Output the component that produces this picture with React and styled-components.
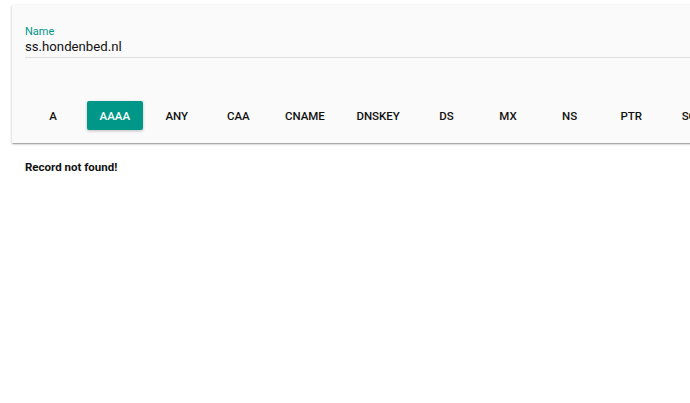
import React from 'react';
import styled, { createGlobalStyle } from 'styled-components';

const GlobalStyle = createGlobalStyle`
  html, body {
    margin: 0;
    padding: 0;
    background: #ffffff;
    overflow: hidden;
    font-family: Roboto, "Liberation Sans", Arial, sans-serif;
  }
`;

const Page = styled.div`
  width: 690px;
  height: 403px;
  overflow: hidden;
`;

const Card = styled.div`
  margin: 5px 0 0 12px;
  width: 760px;
  background: #fafafa;
  box-shadow: 0 1px 3px rgba(0, 0, 0, 0.2), 0 1px 1px rgba(0, 0, 0, 0.14), 0 2px 1px -1px rgba(0, 0, 0, 0.12);
  padding: 20px 0 13px 13px;
  box-sizing: border-box;
`;

const Field = styled.div`
  display: flex;
  flex-direction: column;
`;

const Label = styled.label`
  color: #009688;
  font-size: 11px;
  line-height: 13px;
`;

const Input = styled.input`
  border: none;
  border-bottom: 1px solid #dedede;
  background: transparent;
  font-family: Roboto, "Liberation Sans", Arial, sans-serif;
  font-size: 13.2px;
  line-height: 16px;
  height: 20px;
  box-sizing: border-box;
  color: #111;
  padding: 1px 0 3px;
  outline: none;
`;

const Types = styled.div`
  display: flex;
  gap: 5.6px;
  margin-top: 43px;
`;

const TypeButton = styled.button`
  min-width: 56px;
  height: 29px;
  padding: 0 13px;
  border: none;
  border-radius: 2px;
  font-family: Roboto, "Liberation Sans", Arial, sans-serif;
  font-weight: 500;
  font-size: 11.5px;
  text-transform: uppercase;
  flex-shrink: 0;
  background: ${p => (p.$active ? '#009688' : 'transparent')};
  color: ${p => (p.$active ? '#ffffff' : '#111')};
  box-shadow: ${p => (p.$active ? '0 1px 3px rgba(0,0,0,0.25)' : 'none')};
`;

const Message = styled.p`
  margin: 17px 0 0 25px;
  font-size: 11.5px;
  line-height: 14px;
  font-weight: 700;
  color: #111;
`;

const types = ['A', 'AAAA', 'ANY', 'CAA', 'CNAME', 'DNSKEY', 'DS', 'MX', 'NS', 'PTR', 'SOA'];

export default function App() {
  return (
    <Page>
      <GlobalStyle />
      <Card>
        <Field>
          <Label>Name</Label>
          <Input defaultValue="ss.hondenbed.nl" />
        </Field>
        <Types>
          {types.map(t => (
            <TypeButton key={t} $active={t === 'AAAA'}>{t}</TypeButton>
          ))}
        </Types>
      </Card>
      <Message>Record not found!</Message>
    </Page>
  );
}
